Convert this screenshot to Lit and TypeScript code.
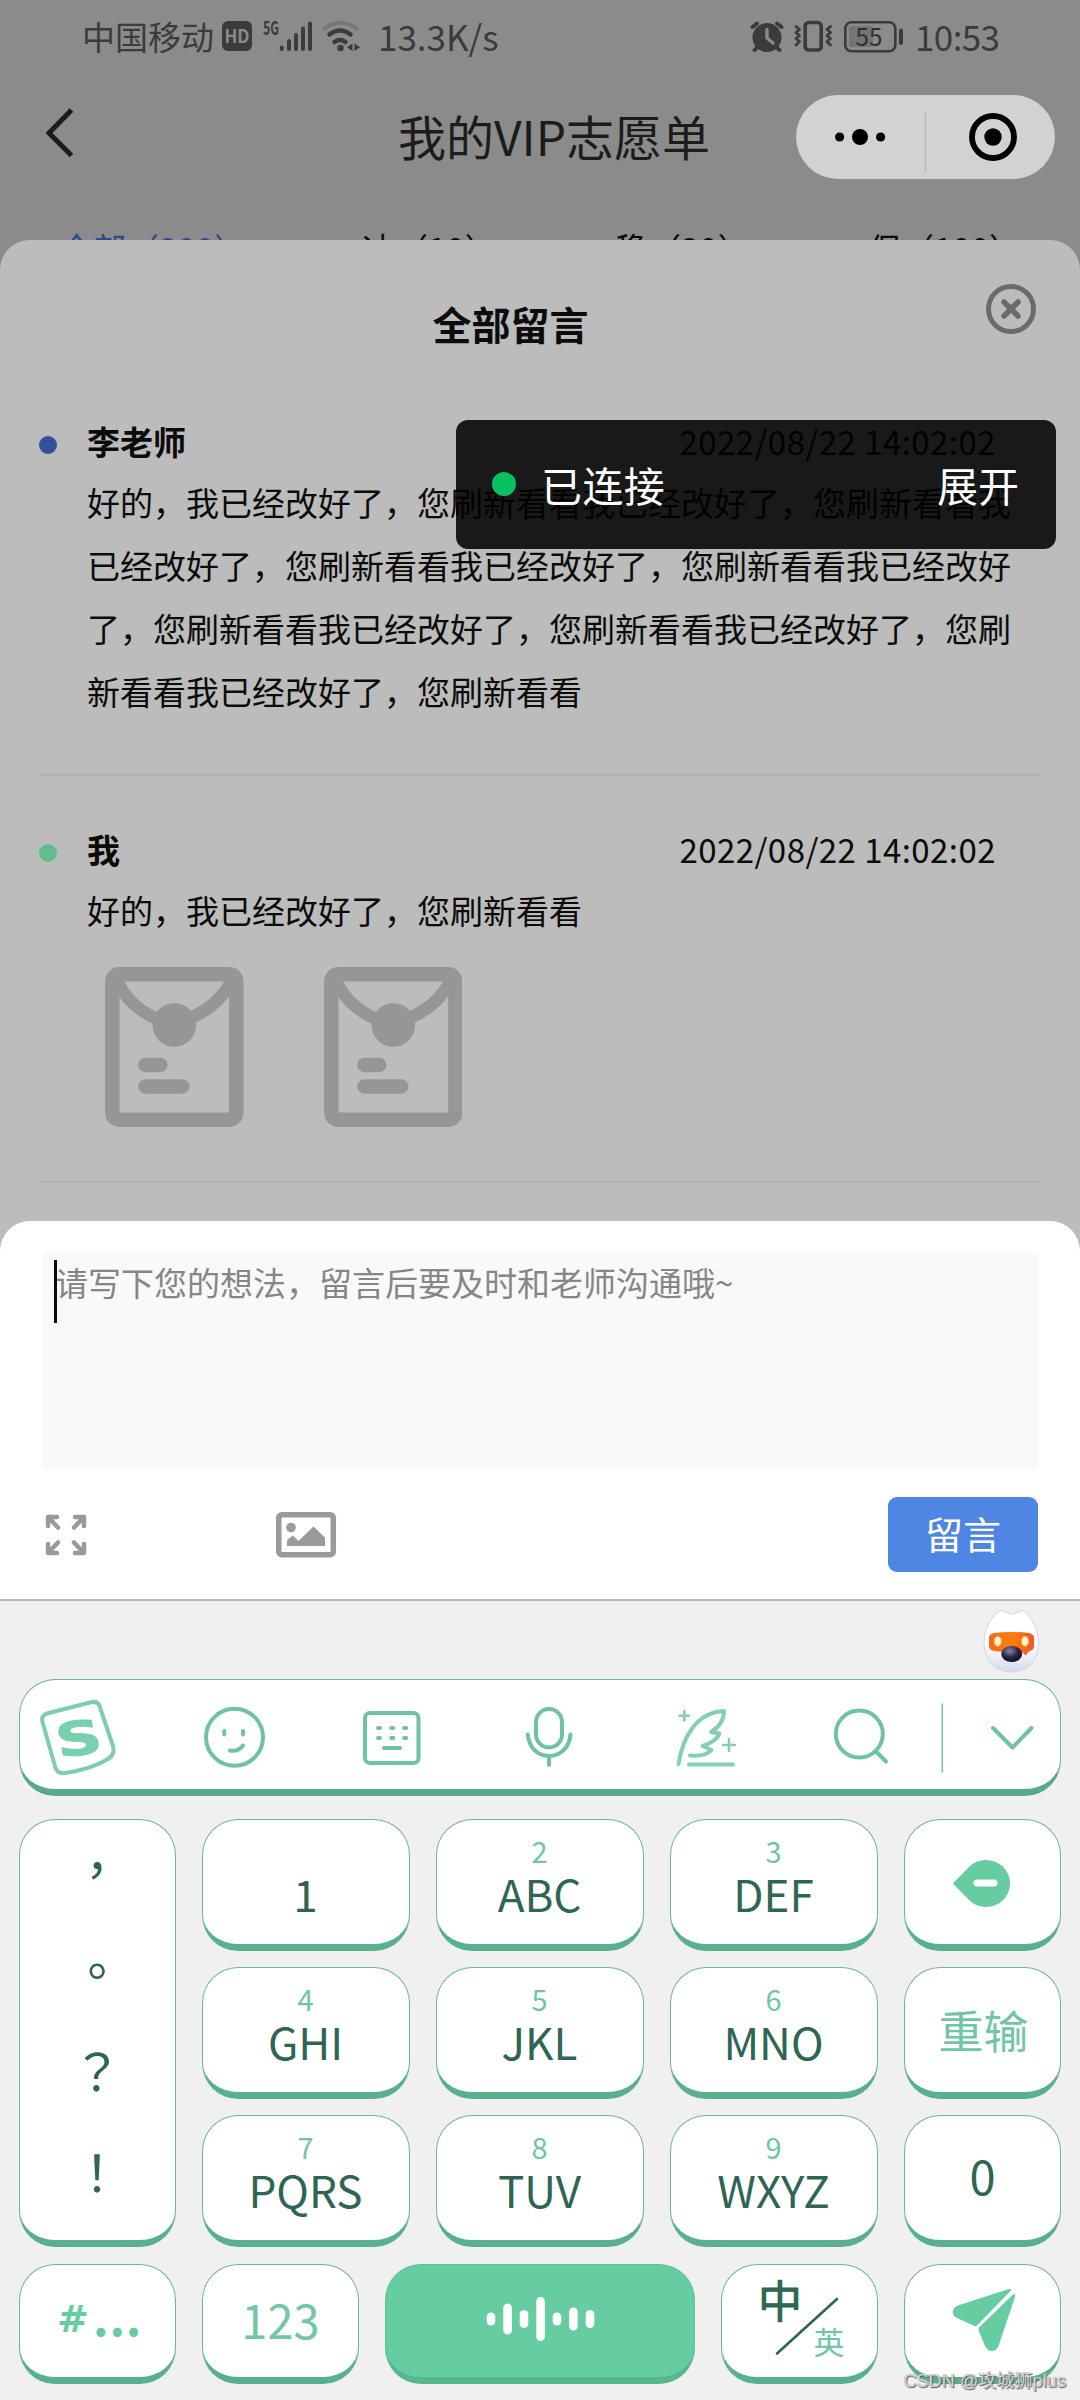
import { LitElement, html, svg, css, nothing, TemplateResult, SVGTemplateResult } from "lit";
import { customElement, property } from "lit/decorators.js";

const GREEN = "#6fc3a4";
const SOLID = "#66cca1";
const PHRASE = "我已经改好了，您刷新看看";

/** Every drawing uses screen coordinates, so its view box is its own place on the screen. */
const art = (x: number, y: number, w: number, h: number, body: SVGTemplateResult): TemplateResult =>
  html`<svg width=${w} height=${h} viewBox="${x} ${y} ${w} ${h}" fill="none" stroke-linecap="round" stroke-linejoin="round">${body}</svg>`;

@customElement("status-bar")
class StatusBar extends LitElement {
  static styles = css`
    :host { display: flex; height: 76px; padding-left: 82px; align-items: center; color: #3b3b3b; font-size: 33px; line-height: 40px; }
    svg { display: block; flex: none; }
    .carrier { width: 140px; white-space: nowrap; padding-bottom: 4px; }
    .speed { margin-left: 16px; width: 369px; font-size: 35px; letter-spacing: 0; padding-bottom: 4px; white-space: nowrap; }
    .time { margin-left: 8px; font-size: 35px; padding-bottom: 4px; letter-spacing: -0.6px; }
    text { font-family: "Noto Sans CJK SC", sans-serif; }
  `;
  render() {
    return html`
      <span class="carrier">中国移动</span>
      ${art(222, 0, 140, 76, svg`
        <rect x="222" y="21" width="30" height="30" rx="6" fill="#3b3b3b"/>
        <text x="237" y="43" font-size="18" font-weight="700" fill="#8b8b8b" text-anchor="middle" textLength="25" lengthAdjust="spacingAndGlyphs">HD</text>
        <text x="263" y="35" font-size="19" font-weight="700" fill="#3b3b3b" textLength="16" lengthAdjust="spacingAndGlyphs">5G</text>
        <g stroke="#3b3b3b" stroke-width="4"><path d="M281.7 47.500V49M289 41V49M296 35V49M303 28.500V49M310 23.500V49"/></g>
        <path d="M324.500 28.500Q340.500 17 357 28.500" stroke="#777" stroke-width="4"/>
        <path d="M329.500 34.500Q340 26.500 350.500 34.500" stroke="#3b3b3b" stroke-width="4.500"/>
        <path d="M334.500 42Q340 38 345.500 42" stroke="#3b3b3b" stroke-width="4.500"/>
        <circle cx="340.500" cy="48" r="3.300" fill="#3b3b3b"/>
        <path d="M352.500 43.500V51L347 47.200ZM354.500 43.500V51L360 47.200Z" fill="#3b3b3b"/>`)}
      <span class="speed">13.3K/s</span>
      ${art(747, 0, 160, 76, svg`
        <circle cx="767" cy="37.500" r="14.500" fill="#3b3b3b"/>
        <path d="M752.500 27L757 23.500M781.500 27L777 23.500M758 47L754.500 50M776 47L779.500 50" stroke="#3b3b3b" stroke-width="4"/>
        <path d="M767 29.500V38L773 43" stroke="#8b8b8b" stroke-width="3.400"/>
        <rect x="805.200" y="22.500" width="16" height="27.500" rx="3.500" stroke="#3b3b3b" stroke-width="3.600"/>
        <path d="M796 26.500L799.500 29.500L796 32.500L799.500 35.500L796 38.500L799.500 41.500L796 45M830.500 26.500L827 29.500L830.500 32.500L827 35.500L830.500 38.500L827 41.500L830.500 45" stroke="#3b3b3b" stroke-width="2.800"/>
        <rect x="845.300" y="22.300" width="50" height="29" rx="6" stroke="#3b3b3b" stroke-width="2.600"/>
        <rect x="849" y="26" width="24" height="21" rx="2" fill="#757575"/>
        <path d="M901 30.500V43" stroke="#3b3b3b" stroke-width="4"/>
        <text x="869" y="46" font-size="25" fill="#303030" text-anchor="middle" textLength="27" lengthAdjust="spacingAndGlyphs">55</text>`)}
      <span class="time">10:53</span>`;
  }
}

@customElement("page-header")
class PageHeader extends LitElement {
  static styles = css`
    :host { display: block; }
    .bar { display: flex; align-items: center; height: 122px; padding-left: 46px; }
    svg { display: block; flex: none; }
    .title { width: 722px; padding-left: 324px; box-sizing: border-box; font-size: 48px; line-height: 60px; color: #1c1c1c; white-space: nowrap; padding-bottom: 4px; }
    .capsule { width: 259px; height: 84px; border-radius: 42px; background: #d2d2d2; }
    .tabs { display: flex; height: 42px; overflow: hidden; font-size: 33px; line-height: 40px; padding: 30px 0 0 60px; box-sizing: border-box; color: #080808; }
    .tab { flex: none; white-space: nowrap; }
    .t0 { width: 302px; color: #33488d; }
    .t1 { width: 253px; }
    .t2 { width: 253px; }
  `;
  render() {
    const tabs = ["全部（200）", "冲（10）", "稳（20）", "保（100）"];
    return html`
      <div class="bar">
        ${art(46, 80, 28, 114, svg`<path d="M71.500 110L49 133L71.500 155.500" stroke="#1c1c1c" stroke-width="5" stroke-linecap="butt" stroke-linejoin="miter"/>`)}
        <div class="title">我的VIP志愿单</div>
        <div class="capsule">
          ${art(796, 95, 259, 84, svg`
            <g fill="#000"><circle cx="839.600" cy="137" r="4.600"/><circle cx="860" cy="137" r="8"/><circle cx="880.600" cy="137" r="4.600"/><circle cx="993" cy="137" r="8.700"/></g>
            <path d="M925.500 112V172" stroke="#bbb" stroke-width="1.500"/>
            <circle cx="993" cy="137" r="21" stroke="#000" stroke-width="5.800"/>`)}
        </div>
      </div>
      <div class="tabs">${tabs.map((t, i) => html`<span class="tab t${i}">${t}</span>`)}</div>`;
  }
}

@customElement("message-item")
class MessageItem extends LitElement {
  @property() author = "";
  @property() body = "";
  @property() tone = "teacher";
  @property({ type: Number }) images = 0;
  static styles = css`
    :host { display: block; margin: 0 40px 0 38px; border-bottom: 2px solid #b3b3b3; font-size: 33px; color: #0b0b0b; }
    .head { display: flex; align-items: center; height: 63px; padding-right: 44px; }
    .dot { width: 18px; height: 18px; border-radius: 50%; margin: 2px 31px 0 1px; }
    .teacher { background: #344f9b; }
    .me { background: #60bd87; }
    .name { flex: 1; font-weight: 700; line-height: 63px; padding-bottom: 5px; margin-left: -1px; }
    .date { letter-spacing: 0.45px; line-height: 63px; padding-bottom: 4px; }
    .body { margin: -4px 0 0 49px; width: 926px; line-height: 63px; word-break: break-all; }
    .images { display: flex; gap: 80px; padding: 25px 0 0 67px; }
    svg { display: block; }
  `;
  render() {
    return html`
      <div class="head"><i class="dot ${this.tone}"></i><span class="name">${this.author}</span><span class="date">2022/08/22 14:02:02</span></div>
      <div class="body">${this.body}</div>
      ${this.images ? html`<div class="images">${Array.from({ length: this.images }, () => art(104.7, 967, 138.5, 160, svg`
        <rect x="112" y="974.200" width="124" height="145.600" rx="7" stroke="#969696" stroke-width="14.400"/>
        <path d="M119 985Q134 1014 172 1024Q212 1014 229 985" stroke="#969696" stroke-width="12.500"/>
        <circle cx="174" cy="1025" r="21.800" fill="#969696"/>
        <path d="M145 1065H160M145 1086.500H182" stroke="#969696" stroke-width="14.400"/>`))}</div>` : nothing}`;
  }
}

@customElement("composer-panel")
class ComposerPanel extends LitElement {
  static styles = css`
    :host { display: block; height: 378px; box-sizing: border-box; background: #fff; border-radius: 30px 30px 0 0; padding: 31px 42px 0 43px; }
    .field { height: 217px; background: #f9f9f9; position: relative; padding: 8px 0 0 12px; box-sizing: border-box; font-size: 33px; line-height: 44px; color: #868686; }
    .caret { position: absolute; left: 11px; top: 8px; width: 3px; height: 63px; background: #0c0c0c; }
    .actions { display: flex; align-items: center; height: 75px; margin-top: 28px; }
    svg { display: block; }
    .send { margin-left: auto; width: 150px; height: 75px; border-radius: 9px; background: #4f86e3; color: #fff; font-size: 38px; line-height: 71px; text-align: center; }
  `;
  render() {
    return html`
      <div class="field">请写下您的想法，留言后要及时和老师沟通哦~<i class="caret"></i></div>
      <div class="actions">
        ${art(43, 1497, 233, 75, svg`<g stroke="#9a9a9a" stroke-width="4.500">
          <path d="M57 1517H48V1526M49 1518L58 1527.500M75 1517H84V1526M83 1518L74 1527.500M57 1553H48V1544M49 1552L58 1542.500M75 1553H84V1544M83 1552L74 1542.500"/></g>`)}
        ${art(276, 1497, 62, 75, svg`
          <rect x="278.800" y="1514.800" width="54.500" height="40" rx="3" stroke="#9a9a9a" stroke-width="5.500"/>
          <circle cx="291" cy="1527.500" r="4.800" fill="#9a9a9a"/>
          <path d="M287 1546V1540L293 1535.500L298.500 1541L313.500 1526.500L325 1537.500V1546Z" fill="#9a9a9a"/>`)}
        <div class="send">留言</div>
      </div>`;
  }
}

@customElement("key-board")
class KeyBoard extends LitElement {
  static styles = css`
    :host { display: block; height: 801px; box-sizing: border-box; border-top: 2px solid #bababa; background: #f0f0f0; padding: 0 19px; }
    svg { display: block; flex: none; }
    .mascot { display: flex; justify-content: flex-end; height: 78px; padding-right: 18px; }
    .tools { display: flex; height: 117px; box-sizing: border-box; border: 1px solid #72b298; border-bottom: 7px solid #55aa87; border-radius: 36px; background: #fff; }
    .logo { font-family: "DejaVu Sans", sans-serif; font-weight: 700; }
    .pad { display: grid; grid-template-columns: 157px repeat(3, 208px) 157px; grid-auto-rows: 132px; gap: 16px 26px; margin-top: 23px; }
    .bottom { display: grid; grid-template-columns: 157px 157px 310px 157px 157px; column-gap: 26px; margin-top: 17px; height: 120px; }
    .key { display: flex; flex-direction: column; align-items: center; box-sizing: border-box; border: 1px solid #6db698; border-bottom: 7px solid #58b18c; border-radius: 36px; background: #fff; color: #2f6553; font-size: 44px; line-height: 44px; }
    .key > span { margin-right: 1px; }
    .marks { grid-row: span 3; font-family: "Noto Sans CJK TC", sans-serif; font-size: 50px; line-height: 101px; }
    .marks > span { height: 101px; margin-top: -3px; margin-bottom: 3px; }
    .mid { justify-content: center; }
    .hint { height: 30px; margin: 15px 0 6px; font-size: 29px; line-height: 30px; color: #70c5a5; }
    .reset { font-size: 45px; color: #70c5a5; padding: 0 0 0 2px; }
    .zero { font-size: 47px; padding-bottom: 6px; }
    .num { font-size: 47px; color: #73c7a7; padding-bottom: 5px; }
    .space { background: #66cca1; border-color: #5fc398; border-bottom-color: #57b78f; }
    .sym { flex-direction: row; color: #66cca1; font-weight: 700; justify-content: flex-start; padding-left: 37px; }
    .hash { font-size: 38px; font-family: "DejaVu Sans", sans-serif; width: 35px; padding-bottom: 4px; }
    .dots { font-size: 48px; letter-spacing: 0.8px; padding-bottom: 12px; }
    .lang text { font-family: "Noto Sans CJK SC", sans-serif; }
  `;
  private key(hint: string, label: string) {
    return html`<div class="key"><span class="hint">${hint}</span><span>${label}</span></div>`;
  }
  render() {
    const bars = [[491, 13], [507.6, 31], [524, 18], [540.6, 44], [557, 13], [573.4, 23], [590, 18]];
    return html`
      <div class="mascot">${art(979, 1601, 64, 78, svg`
        <defs>
          <linearGradient id="face" x1="0" y1="0" x2="0" y2="1"><stop offset=".55" stop-color="#fff"/><stop offset="1" stop-color="#d4d8ee"/></linearGradient>
          <linearGradient id="visor" x1="0" y1="0" x2="1" y2="0"><stop offset="0" stop-color="#f06a20"/><stop offset=".5" stop-color="#ff7d0a"/><stop offset="1" stop-color="#f0562a"/></linearGradient>
          <radialGradient id="nose" cx=".4" cy=".3" r=".7"><stop offset="0" stop-color="#8585a8"/><stop offset=".6" stop-color="#25233f"/><stop offset="1" stop-color="#15122c"/></radialGradient>
        </defs>
        <path d="M1012 1614.500Q1017 1612 1020 1610.500Q1024 1609.500 1029 1616Q1038.500 1627 1038.500 1643Q1037 1671.500 1011.500 1672Q986 1671.500 984 1643Q984 1627 994 1616Q998 1609.500 1002 1610.500Z" fill="url(#face)" stroke="#d4d5df" stroke-width="1"/>
        <path d="M994 1633Q1011 1631 1029 1633Q1034 1634 1034 1638V1646Q1034 1650 1029 1651.500L1025.500 1655.500L1022 1652Q1011 1653 994 1651Q989 1650 989 1646V1638Q989 1634 994 1633Z" fill="url(#visor)"/>
        <ellipse cx="997.800" cy="1641.300" rx="3.600" ry="5" fill="#fff6c9" stroke="#ffb347" stroke-width="1"/>
        <ellipse cx="1025" cy="1641.300" rx="3.600" ry="5" fill="#fff6c9" stroke="#ffb347" stroke-width="1"/>
        <ellipse cx="1011.700" cy="1654" rx="10.500" ry="8" fill="url(#nose)"/>`)}</div>
      <div class="tools">
        ${art(20, 1680, 136, 109, svg`
          <path d="M47 1713.500L91 1702.300Q97.500 1700.500 99.500 1706L113 1746Q115.500 1754 108 1759Q92 1769 65 1773Q58 1774 55.500 1768L42.500 1722Q40.500 1715.500 47 1713.500Z" stroke="#7fcdb0" stroke-width="4"/>
          <text class="logo" transform="translate(78.500 1738) rotate(-7) skewX(3)" x="0" y="17" font-size="47" text-anchor="middle" textLength="46" lengthAdjust="spacingAndGlyphs" fill="#78d0ad" stroke="#78d0ad" stroke-width="1">S</text>`)}
        ${art(156, 1680, 157, 109, svg`<g stroke=${GREEN} stroke-width="4"><circle cx="234.500" cy="1737.300" r="28.500"/>
          <path d="M224.300 1731V1734.500M243 1731V1734.500M230 1750.500Q238.500 1752 243 1745.500"/></g>`)}
        ${art(313, 1680, 157, 109, svg`<rect x="365" y="1713" width="53.500" height="50" rx="5" stroke=${GREEN} stroke-width="4"/>
          <path d="M378 1728H380M391.300 1728H393.300M404.200 1728H406.200M378 1738H380M391.300 1738H393.300M404.200 1738H406.200M384 1748H400" stroke=${GREEN} stroke-width="4"/>`)}
        ${art(470, 1680, 158, 109, svg`<g stroke=${GREEN} stroke-width="4"><rect x="536" y="1709" width="26" height="38.500" rx="13"/>
          <path d="M527.800 1734.500C529 1747 537 1756 549 1756S569.500 1747 570.500 1734.500M549 1756V1765"/></g>`)}
        ${art(628, 1680, 157, 109, svg`<g stroke="#84ceb3" stroke-width="4"><path d="M678.500 1764C683 1735 698 1712 724 1711Q724 1724 711 1732L719.500 1733.500Q716 1742 702.500 1746L711.500 1750Q705 1757 690 1755.500M689 1764.500H733"/></g>
          <path d="M684.300 1711V1720.500M679.500 1715.800H689M729 1739V1751M723 1745H735" stroke="#84ceb3" stroke-width="2.600"/>`)}
        ${art(785, 1680, 156, 109, svg`<g stroke=${GREEN} stroke-width="4"><circle cx="859.300" cy="1734" r="23.500"/><path d="M876.500 1752L886 1761.500"/></g>`)}
        ${art(941, 1680, 118, 109, svg`<path d="M942.300 1704V1772" stroke=${GREEN} stroke-width="1.500"/><path d="M993 1728L1012.500 1747.500L1031.500 1728" stroke=${GREEN} stroke-width="4"/>`)}
      </div>
      <div class="pad">
        <div class="key marks"><span>，</span><span>。</span><span>？</span><span>！</span></div>
        ${this.key("", "1")}${this.key("2", "ABC")}${this.key("3", "DEF")}
        <div class="key">${art(930, 1820, 105, 124, svg`<path d="M952.800 1883.500L969 1867A24 23.500 0 1 1 969 1900Z" fill=${SOLID}/><path d="M977 1883H994" stroke="#fff" stroke-width="7"/>`)}</div>
        ${this.key("4", "GHI")}${this.key("5", "JKL")}${this.key("6", "MNO")}
        <div class="key mid reset">重输</div>
        ${this.key("7", "PQRS")}${this.key("8", "TUV")}${this.key("9", "WXYZ")}
        <div class="key mid zero">0</div>
      </div>
      <div class="bottom">
        <div class="key mid sym"><span class="hash">#</span><span class="dots">...</span></div>
        <div class="key mid num">123</div>
        <div class="key space">${art(480, 2265, 120, 112, svg`<g stroke="#fff" stroke-width="8.600">${bars.map(([x, h]) => svg`<path d="M${x} ${2319 - h / 2 + 4.3}V${2319 + h / 2 - 4.3}"/>`)}</g>`)}</div>
        <div class="key lang">${art(722, 2265, 155, 112, svg`
          <text x="780" y="2318" font-size="44" text-anchor="middle" fill="#2f6553" stroke="#2f6553" stroke-width="1">中</text>
          <path d="M837 2299L777 2353.500" stroke="#2f6553" stroke-width="2.600"/>
          <text x="829" y="2354" font-size="31" text-anchor="middle" fill="#70c5a5">英</text>`)}</div>
        <div class="key">${art(905, 2265, 155, 112, svg`<g fill=${SOLID}>
          <path d="M1009 2289Q1013 2288.500 1010 2291.500L977 2325.500Q976 2326.500 974.500 2326L956 2317.500Q952.500 2315 953 2311Q953.500 2307.500 958 2305.500Z"/>
          <path d="M1013 2294.500Q1015.500 2292.500 1015 2297L998.500 2346Q996.500 2351 991.500 2351Q987.500 2351 985 2346L978.500 2330Q978 2328.500 979 2327.500Z"/></g>`)}</div>
      </div>`;
  }
}

@customElement("app-root")
class AppRoot extends LitElement {
  static styles = css`
    :host { display: block; position: relative; width: 1080px; height: 2400px; overflow: hidden; background: #8b8b8b; font-family: "Noto Sans CJK SC", sans-serif; }
    .sheet { height: 981px; box-sizing: border-box; border-radius: 30px 30px 0 0; background: #bcbcbc; }
    .top { display: grid; grid-template-columns: 1fr auto 1fr; height: 172px; }
    .heading { grid-column: 2; padding-top: 59px; font-size: 39px; font-weight: 700; line-height: 48px; color: #0c0c0c; margin-left: -59px; }
    .close { justify-self: end; padding: 44px 44px 0 0; }
    .close svg { display: block; }
    .first { height: 362px; }
    .second { height: 361px; padding-top: 44px; }
    .under { background: #bcbcbc; }
    .toast { position: absolute; left: 456px; top: 420px; width: 600px; height: 129px; box-sizing: border-box; padding: 0 37px 2px 36px; border-radius: 12px; background: rgba(0, 0, 0, 0.868); color: #fff; display: flex; align-items: center; font-size: 41px; line-height: 60px; }
    .led { width: 24px; height: 24px; border-radius: 50%; background: #07c160; margin-right: 25px; }
    .grow { flex: 1; letter-spacing: 0.4px; }
    .mark { position: absolute; right: 14px; bottom: 6px; font-size: 18px; line-height: 26px; font-family: "Liberation Sans", "Noto Sans CJK SC", sans-serif; letter-spacing: 0.1px; color: #d6d6d6; text-shadow: 1px 1px 1px #555, 0 0 1px #999; white-space: nowrap; }
  `;
  render() {
    return html`
      <status-bar></status-bar>
      <page-header></page-header>
      <section class="sheet">
        <div class="top">
          <div class="heading">全部留言</div>
          <div class="close">${art(986, 284, 50, 50, svg`<circle cx="1011" cy="309" r="22.500" stroke="#6b6b6b" stroke-width="5"/><path d="M1004 302L1018 316M1018 302L1004 316" stroke="#6b6b6b" stroke-width="5.500"/>`)}</div>
        </div>
        <message-item class="first" tone="teacher" author="李老师" body=${"好的，" + PHRASE.repeat(8)}></message-item>
        <message-item class="second" tone="me" author="我" body=${"好的，" + PHRASE} .images=${2}></message-item>
      </section>
      <div class="under"><composer-panel></composer-panel></div>
      <key-board></key-board>
      <div class="toast"><i class="led"></i><span class="grow">已连接</span><span>展开</span></div>
      <div class="mark">CSDN @攻城狮plus</div>`;
  }
}
